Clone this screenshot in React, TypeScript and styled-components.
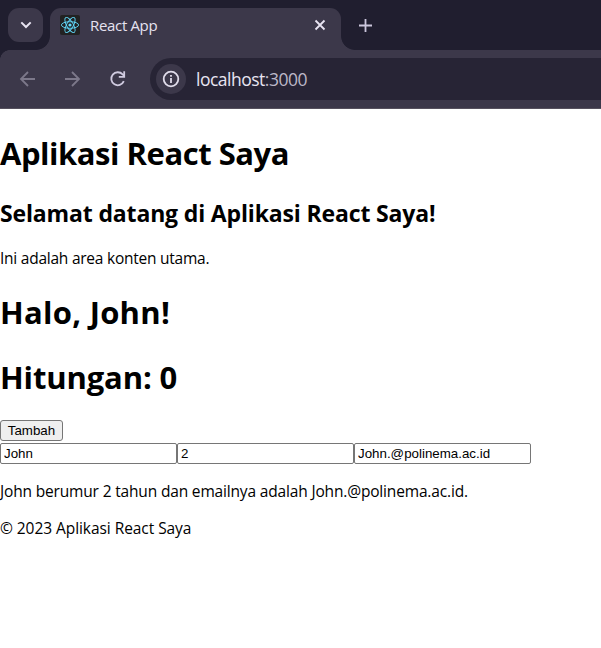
import React, { useState } from "react";
import styled, { createGlobalStyle } from "styled-components";

const GlobalStyle = createGlobalStyle`
  body {
    margin: 0;
    background: #fff;
    color: #000;
    font-family: "Open Sans", "Noto Sans", sans-serif;
    overflow: hidden;
  }
`;

const Browser = styled.div`
  height: 109px;
  display: flex;
  flex-direction: column;
  background: #3c384a;
  box-sizing: border-box;
  border-bottom: 1px solid #56515e;
`;

const TabStrip = styled.div`
  height: 50px;
  flex: none;
  display: flex;
  align-items: flex-start;
  background: #201e2f;
`;

const TabSearch = styled.div`
  width: 35px;
  height: 34px;
  margin: 8px 7px 0 8px;
  border-radius: 11px;
  background: #3c384a;
  display: flex;
  align-items: center;
  justify-content: center;
`;

const Tab = styled.div`
  position: relative;
  width: 291px;
  height: 42px;
  margin-top: 8px;
  box-sizing: border-box;
  padding: 0 15px 8px 10px;
  border-radius: 11px 11px 0 0;
  background: #3c384a;
  display: flex;
  align-items: center;
`;

const TabFoot = styled.span<{ $side: "left" | "right" }>`
  position: absolute;
  bottom: 0;
  ${(p) => p.$side}: -14px;
  width: 14px;
  height: 14px;
  background: radial-gradient(
    circle at ${(p) => (p.$side === "left" ? "0 0" : "100% 0")},
    transparent 13.5px,
    #3c384a 14.3px
  );
`;

const Favicon = styled.span`
  width: 20px;
  height: 20px;
  border-radius: 2px;
  background: #222222;
  display: flex;
`;

const TabTitle = styled.span`
  flex: 1;
  margin-left: 10px;
  font-size: 15px;
  line-height: 20px;
  letter-spacing: -0.33px;
  color: #e6e2f0;
`;

const NewTab = styled.div`
  margin: 17px 0 0 16px;
  display: flex;
`;

const Toolbar = styled.div`
  position: relative;
  height: 58px;
  display: flex;
  align-items: center;
  padding-left: 19px;
  box-sizing: border-box;
`;

const ToolbarCorner = styled.span`
  position: absolute;
  left: 0;
  top: 0;
  width: 10px;
  height: 10px;
  background: radial-gradient(circle at 100% 100%, transparent 9.6px, #201e2f 10.2px);
`;

const NavIcon = styled.span`
  width: 18px;
  height: 18px;
  margin-right: 27px;
  display: flex;
`;

const AddressBar = styled.div`
  flex: 1;
  height: 42px;
  margin-left: -4px;
  padding-left: 6px;
  border-radius: 21px 0 0 21px;
  background: #272435;
  display: flex;
  align-items: center;
`;

const SiteInfo = styled.span`
  width: 30px;
  height: 30px;
  border-radius: 50%;
  background: #3c384a;
  display: flex;
  align-items: center;
  justify-content: center;
`;

const Url = styled.span`
  margin-left: 10px;
  font-size: 17.5px;
  line-height: 24px;
  letter-spacing: -0.5px;
  color: #e8e4f2;
`;

const Port = styled.span`
  color: #bcb8c8;
`;

const Title = styled.h1<{ $spacing: number }>`
  margin: 21.44px 0;
  font-size: 31px;
  line-height: 43px;
  font-weight: 700;
  white-space: nowrap;
  letter-spacing: ${(p) => p.$spacing}px;
`;

const Header = styled.header`
  padding-top: 2px;
`;

const Subtitle = styled.h2`
  margin: 19.92px 0 18.92px;
  font-size: 23px;
  line-height: 32px;
  font-weight: 700;
  white-space: nowrap;
  letter-spacing: -0.15px;
`;

const Paragraph = styled.p<{ $spacing: number }>`
  margin: 16px 0;
  font-size: 15.5px;
  line-height: 21px;
  white-space: nowrap;
  letter-spacing: ${(p) => p.$spacing}px;
`;

const Intro = styled(Paragraph)`
  margin-bottom: 22.44px;
`;

const Summary = styled(Paragraph)`
  margin-top: 17px;
`;

const AddButton = styled.button`
  display: block;
  width: 63px;
  height: 21px;
  padding: 0;
  margin-bottom: 2px;
  border: 1px solid #767676;
  border-radius: 3px;
  background: #efefef;
  color: #000;
  font: 13.333px "Liberation Sans", Arial, sans-serif;
`;

const Fields = styled.div`
  display: flex;
`;

const Field = styled.input`
  width: 177px;
  height: 21px;
  box-sizing: border-box;
  margin: 0;
  padding: 0 3px;
  border: 1px solid #767676;
  border-radius: 2px;
  background: #fff;
  color: #000;
  font: 13.333px "Liberation Sans", Arial, sans-serif;
`;

const ReactLogo = () => (
  <svg width="20" height="20" viewBox="0 0 20 20" fill="none" stroke="#61dafb" strokeWidth="0.9">
    <ellipse cx="10" cy="10" rx="8.6" ry="3.3" />
    <ellipse cx="10" cy="10" rx="8.6" ry="3.3" transform="rotate(60 10 10)" />
    <ellipse cx="10" cy="10" rx="8.6" ry="3.3" transform="rotate(120 10 10)" />
    <circle cx="10" cy="10" r="1.6" fill="#61dafb" stroke="none" />
  </svg>
);

export default function App() {
  const [count, setCount] = useState(0);
  const [name, setName] = useState("John");
  const [age, setAge] = useState("2");
  const [email, setEmail] = useState("John.@polinema.ac.id");

  return (
    <>
      <GlobalStyle />
      <Browser>
        <TabStrip>
          <TabSearch>
            <svg width="12" height="8" viewBox="0 0 12 8" fill="none" stroke="#e8e4f2" strokeWidth="2">
              <path d="M1.3 1.4 6 6l4.7-4.6" />
            </svg>
          </TabSearch>
          <Tab>
            <TabFoot $side="left" />
            <TabFoot $side="right" />
            <Favicon>
              <ReactLogo />
            </Favicon>
            <TabTitle>React App</TabTitle>
            <svg width="12" height="12" viewBox="0 0 12 12" stroke="#e8e4f2" strokeWidth="1.8">
              <path d="M1.5 1.5l9 9M10.5 1.5l-9 9" />
            </svg>
          </Tab>
          <NewTab>
            <svg width="16" height="16" viewBox="0 0 16 16" stroke="#cbc6dc" strokeWidth="1.8">
              <path d="M8.5 2v13M2 8.5h13" />
            </svg>
          </NewTab>
        </TabStrip>
        <Toolbar>
          <ToolbarCorner />
          <NavIcon>
            <svg width="18" height="18" viewBox="0 0 18 18" fill="none" stroke="#7c788a" strokeWidth="1.8">
              <path d="M16 9H2.5M9 2 2 9l7 7" />
            </svg>
          </NavIcon>
          <NavIcon>
            <svg width="18" height="18" viewBox="0 0 18 18" fill="none" stroke="#7c788a" strokeWidth="1.8">
              <path d="M1 9h13.5M8 2l7 7-7 7" />
            </svg>
          </NavIcon>
          <NavIcon>
            <svg width="18" height="18" viewBox="0 0 18 18" fill="none" stroke="#d0cbe0" strokeWidth="1.8">
              <path d="M14.8 11.2A6.5 6.5 0 1 1 13.6 4.4L15.4 6.2M15.2 1.2v5.6H9.8" />
            </svg>
          </NavIcon>
          <AddressBar>
            <SiteInfo>
              <svg width="18" height="18" viewBox="0 0 18 18" fill="none" stroke="#e0dcea" strokeWidth="1.8">
                <circle cx="9" cy="9" r="7.3" />
                <path d="M9 8v5M9 5v1.8" />
              </svg>
            </SiteInfo>
            <Url>
              localhost<Port>:3000</Port>
            </Url>
          </AddressBar>
        </Toolbar>
      </Browser>
      <Header>
        <Title $spacing={-0.47}>Aplikasi React Saya</Title>
      </Header>
      <main>
        <Subtitle>Selamat datang di Aplikasi React Saya!</Subtitle>
        <Intro $spacing={-0.24}>Ini adalah area konten utama.</Intro>
        <Title $spacing={0.27}>Halo, {name}!</Title>
        <Title $spacing={-0.13}>Hitungan: {count}</Title>
        <AddButton onClick={() => setCount(count + 1)}>Tambah</AddButton>
        <Fields>
          <Field value={name} onChange={(e) => setName(e.target.value)} />
          <Field value={age} onChange={(e) => setAge(e.target.value)} />
          <Field value={email} onChange={(e) => setEmail(e.target.value)} />
        </Fields>
        <Summary $spacing={-0.165}>
          {name} berumur {age} tahun dan emailnya adalah {email}.
        </Summary>
      </main>
      <footer>
        <Paragraph $spacing={-0.06}>© 2023 Aplikasi React Saya</Paragraph>
      </footer>
    </>
  );
}
